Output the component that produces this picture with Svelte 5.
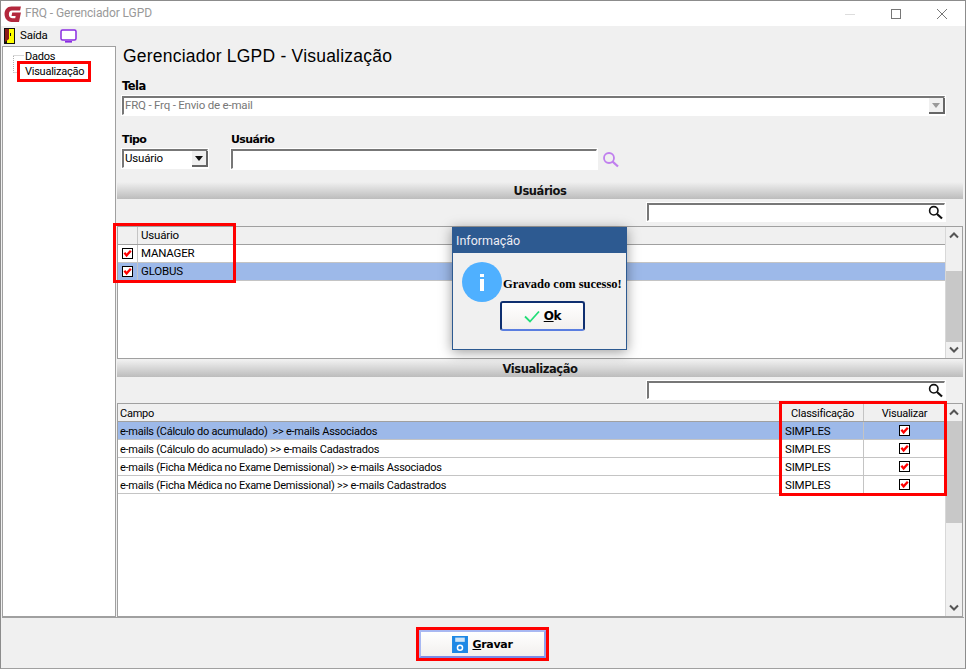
<script>
  const users = [{ name: 'MANAGER', sel: false }, { name: 'GLOBUS', sel: true }];
  const campos = [
    { t: 'e-mails (Cálculo do acumulado)  >> e-mails Associados', sel: true },
    { t: 'e-mails (Cálculo do acumulado) >> e-mails Cadastrados', sel: false },
    { t: 'e-mails (Ficha Médica no Exame Demissional) >> e-mails Associados', sel: false },
    { t: 'e-mails (Ficha Médica no Exame Demissional) >> e-mails Cadastrados', sel: false }
  ];
</script>

{#snippet check()}
  <svg class="check" width="11" height="11" viewBox="0 0 11 11"><rect x="0.5" y="0.5" width="10" height="10" fill="#fff" stroke="#000"/><path d="M2.4 4.8 L4.6 7.4 L8.8 2.8" fill="none" stroke="#f00" stroke-width="2.3"/></svg>
{/snippet}

{#snippet lens()}
  <svg class="lens" width="15" height="15" viewBox="0 0 15 15"><circle cx="5.8" cy="5.8" r="4.2" fill="none" stroke="#111" stroke-width="1.6"/><path d="M9 9 L14 13.5" stroke="#111" stroke-width="2.2"/></svg>
{/snippet}

{#snippet scrollbar(top, height)}
  <div class="scroll">
    <svg class="arrow" width="16" height="17" viewBox="0 0 16 17"><path d="M4 10.5 L8 6.5 L12 10.5" fill="none" stroke="#555" stroke-width="2"/></svg>
    <div class="track"><div class="thumb" style="margin-top:{top}px;height:{height}px"></div></div>
    <svg class="arrow" width="16" height="17" viewBox="0 0 16 17"><path d="M4 6.5 L8 10.5 L12 6.5" fill="none" stroke="#555" stroke-width="2"/></svg>
  </div>
{/snippet}

<div class="window">
  <header class="titlebar">
    <svg class="logo" width="18" height="18" viewBox="0 0 17 17"><path d="M16 1.5 H7 C3 1.5 .5 4.6 .5 8.6 C.5 12.8 3.2 16 7.2 16 H14.2 L16 7.2 H7.8 L7.1 10.4 H11 L10.6 12.4 H7.6 C5.6 12.4 4.6 10.8 4.6 8.8 C4.6 6.6 5.8 5.2 7.6 5.2 H15.2 Z" fill="#b3273c"/></svg>
    <span class="apptitle">FRQ - Gerenciador LGPD</span>
    <div class="winbtns">
      <svg width="12" height="12" viewBox="0 0 12 12"><path d="M1 6.5 H11" stroke="#ddd"/></svg>
      <svg width="12" height="12" viewBox="0 0 12 12"><rect x="1.5" y="1.5" width="9" height="9" fill="none" stroke="#777"/></svg>
      <svg width="12" height="12" viewBox="0 0 12 12"><path d="M1 1 L11 11 M11 1 L1 11" stroke="#777"/></svg>
    </div>
  </header>

  <nav class="menu">
    <svg width="11" height="16" viewBox="0 0 11 16"><rect width="11" height="16" fill="#111"/><rect x="3" y="1" width="7" height="14" fill="#ff0"/><path d="M1 1 H5 V11 L1 14 Z" fill="#8b1a1a"/><rect x="6" y="5" width="1" height="3" fill="#111"/></svg>
    <span class="exit">Saída</span>
    <svg class="monitor" width="17" height="14" viewBox="0 0 17 14"><rect x="1" y="1" width="15" height="10" rx="1.5" fill="#fff" stroke="#8a2be2" stroke-width="1.5"/><rect x="5" y="12" width="7" height="1.6" fill="#8a2be2"/></svg>
  </nav>

  <div class="content">
    <aside class="tree">
      <svg class="links" width="24" height="30" viewBox="0 0 24 30"><path d="M10.5 9 V25.5 M10.5 8.5 H21 M10.5 25.5 H15" fill="none" stroke="#b0b0b0" stroke-dasharray="1 1"/></svg>
      <div class="node first">Dados</div>
      <div class="node"><span class="mark">Visualização</span></div>
    </aside>

    <main class="main">
      <h1>Gerenciador LGPD - Visualização</h1>
      <div class="lbl tela">Tela</div>
      <div class="field combo disabled">
        <span>FRQ - Frq - Envio de e-mail</span>
        <span class="dd dim"><i></i></span>
      </div>

      <div class="filters">
        <div>
          <div class="lbl">Tipo</div>
          <div class="field combo tipo"><span>Usuário</span><span class="dd"><i></i></span></div>
        </div>
        <div>
          <div class="lbl">Usuário</div>
          <div class="userrow">
            <div class="field user"></div>
            <svg width="17" height="17" viewBox="0 0 17 17"><circle cx="7" cy="7" r="5" fill="none" stroke="#c07fee" stroke-width="1.8"/><path d="M10.6 10.6 L16 15.5" stroke="#c07fee" stroke-width="2.2"/></svg>
          </div>
        </div>
      </div>

      <div class="bar b1">Usuários</div>
      <div class="searchrow"><div class="field search">{@render lens()}</div></div>
      <section class="grid g1">
        <div class="gridbody">
          <div class="row head"><div class="c cb"></div><div class="c grow">Usuário</div></div>
          {#each users as u}
            <div class="row" class:sel={u.sel}><div class="c cb plain">{@render check()}</div><div class="c grow">{u.name}</div></div>
          {/each}
          <div class="boxu"></div>
        </div>
        {@render scrollbar(27, 71)}
      </section>

      <div class="bar b2">Visualização</div>
      <div class="searchrow s2"><div class="field search">{@render lens()}</div></div>
      <section class="grid g2">
        <div class="gridbody">
          <div class="row head"><div class="c grow">Campo</div><div class="c cl center">Classificação</div><div class="c vi center">Visualizar</div></div>
          {#each campos as r}
            <div class="row" class:sel={r.sel}><div class="c grow pre">{r.t}</div><div class="c cl">SIMPLES</div><div class="c vi center">{@render check()}</div></div>
          {/each}
          <div class="boxv"></div>
        </div>
        {@render scrollbar(0, 102)}
      </section>
    </main>
  </div>

  <footer class="footer">
    <div class="redbtn">
      <button class="btn gravar">
        <svg width="16" height="17" viewBox="0 0 15 16"><rect width="15" height="16" fill="#1e88e5"/><rect x="3" y="1.5" width="9" height="4" fill="#cfe4f7"/><circle cx="7.5" cy="11" r="2.4" fill="none" stroke="#fff" stroke-width="1.4"/></svg>
        <span><u>G</u>ravar</span>
      </button>
    </div>
  </footer>

  <div class="dialog" role="dialog">
    <div class="dlghead">Informação</div>
    <div class="dlgbody">
      <div class="msg">
        <div class="info"><b></b><i></i></div>
        <span class="msgtext">Gravado com sucesso!</span>
      </div>
      <button class="btn ok">
        <svg width="16" height="13" viewBox="0 0 16 13"><path d="M1 6.5 L6 11.5 L15 1.5" fill="none" stroke="#22dd77" stroke-width="1.8"/></svg>
        <span><u>O</u>k</span>
      </button>
    </div>
  </div>
</div>

<style>
  :global(body) { margin: 0; background: #f0f0f0; }
  .window {
    position: relative; width: 966px; height: 669px; box-sizing: border-box;
    border: 1px solid #8c8c8c; border-bottom-color: #a0a0a0; background: #f0f0f0;
    display: flex; flex-direction: column; overflow: hidden;
    font: 11.5px/1 Roboto, "Liberation Sans", Arial, sans-serif; letter-spacing: -0.2px; color: #000;
  }
  .titlebar { height: 25px; flex: none; background: #fff; display: flex; align-items: center; padding-left: 3px; box-sizing: border-box; }
  .apptitle { margin: 0 0 1px 3px; font: 12px Roboto, sans-serif; letter-spacing: -0.1px; color: #999; }
  .winbtns { margin-left: auto; display: flex; gap: 34px; padding-right: 17px; }
  .menu { height: 20px; flex: none; display: flex; align-items: center; padding-left: 3px; box-sizing: border-box; }
  .exit { margin-left: 5px; font-size: 11.5px; width: 29px; }
  .monitor { margin-left: 11px; }
  .content { flex: none; height: 571px; display: flex; }
  .tree { width: 114px; margin-left: 1px; flex: none; background: #fff; border: 1px solid #a0a0a0; box-sizing: border-box; position: relative; }
  .links { position: absolute; left: 0; top: 0; }
  .node { height: 16px; padding-left: 17px; display: flex; align-items: center; font-size: 11px; letter-spacing: -0.25px; position: relative; }
  .first { margin-top: 1px; padding-left: 22px; }
  .mark { outline: 3px solid #f00; padding: 1px 4px 0 5px; line-height: 14px; margin-bottom: 1px; background: #fff; }
  .main { flex: none; width: 846px; margin-left: 1px; display: flex; flex-direction: column; box-sizing: border-box; }
  h1 { margin: 0 0 0 6px; font: 400 17.5px/20px "Liberation Sans", sans-serif; letter-spacing: 0.22px; height: 20px; flex: none; }
  .lbl { font: 700 11.5px/14px "DejaVu Sans", sans-serif; letter-spacing: -0.55px; display: block; height: 14px; }
  .tela { margin: 13px 0 3px 5px; }
  .field { box-sizing: border-box; background: #fff; border: 1px solid #fff; border-top: 2px solid #777; border-left: 2px solid #777; display: flex; align-items: center; outline: 1px solid #fff; }
  .combo { height: 19px; padding-left: 1px; justify-content: space-between; flex: none; }
  .disabled { width: 823px; margin-left: 5px; color: #777; }
  .dd { width: 16px; height: 16px; background: #f0f0f0; border-right: 2px solid #666; border-bottom: 2px solid #666; box-sizing: border-box; display: flex; align-items: center; justify-content: center; margin-right: -1px; }
  .dd i { border: 4px solid transparent; border-top: 5px solid #111; border-bottom: 0; }
  .dim i { border-top-color: #999; }
  .filters { display: flex; margin: 18px 0 0 5px; gap: 23px; }
  .filters .lbl { margin-bottom: 2px; font-size: 11px; letter-spacing: -0.6px; }
  .tipo { width: 86px; }
  .userrow { display: flex; align-items: center; gap: 5px; }
  .user { width: 366px; height: 20px; }
  .bar { height: 17px; flex: none; background: linear-gradient(#f0f0f0, #bcbcbc); font: 700 11.5px/18px "DejaVu Sans", sans-serif; letter-spacing: -0.45px; text-align: center; color: #111; overflow: hidden; }
  .b1 { margin-top: 13px; }
  .b2 { margin-top: 1px; }
  .searchrow { display: flex; justify-content: flex-end; padding: 4px 18px 0 0; height: 22px; box-sizing: border-box; flex: none; }
  .search { width: 298px; height: 18px; justify-content: flex-end; }
  .lens { margin-right: 1px; }
  .grid { border: 1px solid #a0a0a0; display: flex; box-sizing: border-box; background: #fff; flex: none; }
  .g1 { height: 133px; margin-top: 5px; }
  .g2 { height: 214px; margin-top: 4px; }
  .gridbody { flex: 1; position: relative; }
  .row { display: flex; height: 18px; border-bottom: 1px solid #c4c4c4; box-sizing: border-box; }
  .head { background: #f0f0f0; border-bottom: 1px solid #a0a0a0; }
  .sel { background: #9db9e9; }
  .c { display: flex; align-items: center; padding: 1px 0 0 2px; box-sizing: border-box; border-right: 1px solid #c4c4c4; }
  .grow { flex: 1; min-width: 0; }
  .g2 .grow, .g2 .center { font-size: 11px; letter-spacing: -0.25px; }
  .pre { white-space: pre; }
  .g1 .grow { padding-left: 3px; border-right: 0; }
  .cb { width: 20px; background: #f0f0f0; justify-content: center; padding: 0; }
  .cb.plain { background: transparent; }
  .cl { width: 82px; flex: none; padding: 2px 0 0 3px; }
  .vi { width: 81px; flex: none; border-right: 0; }
  .center { justify-content: center; padding: 1px 0 0; }
  .check { display: block; margin-top: -1px; }
  .scroll { width: 16px; flex: none; border-left: 1px solid #d8d8d8; background: #f0f0f0; display: flex; flex-direction: column; }
  .track { flex: 1; min-height: 0; }
  .thumb { background: #c8c8c8; }
  .arrow { flex: none; display: block; }
  .boxu { position: absolute; left: -5px; top: -4px; width: 123px; height: 60px; border: 3px solid #f00; box-sizing: border-box; pointer-events: none; }
  .boxv { position: absolute; left: 661px; top: -3px; width: 168px; height: 95px; border: 3px solid #f00; box-sizing: border-box; pointer-events: none; }
  .footer { flex: 1; display: flex; justify-content: center; align-items: flex-start; padding-top: 9px; box-sizing: border-box; border-top: 1px solid #a0a0a0; margin: 0 1px; }
  .redbtn { border: 3px solid #f00; margin-left: -1px; }
  .btn { box-sizing: border-box; display: flex; align-items: center; justify-content: center; gap: 4px; background: linear-gradient(#fff, #f2f0ee); font: 700 11px "DejaVu Sans", sans-serif; letter-spacing: -0.3px; color: #000; padding: 0; }
  .gravar { width: 127px; height: 28px; border: 2px solid #a8b8f2; border-bottom-color: #7a8ce8; border-right-color: #8fa0ee; border-radius: 0; }
  .dialog { position: absolute; left: 451px; top: 226px; width: 175px; height: 123px; box-sizing: border-box; border: 1px solid #2d5a91; background: #f0f0f0; box-shadow: 0 2px 12px rgba(0,0,0,.4); }
  .dlghead { height: 25px; background: #2d5a91; color: #ececf4; font: 12.5px/26px Roboto, sans-serif; letter-spacing: 0; padding-left: 3px; }
  .dlgbody { display: flex; flex-direction: column; }
  .msg { display: flex; align-items: center; padding: 9px 0 0 9px; }
  .info { width: 40px; height: 40px; border-radius: 50%; background: #4fb0ff; flex: none; display: flex; flex-direction: column; align-items: center; justify-content: center; gap: 2px; }
  .info b { width: 4px; height: 3px; background: #fff; }
  .info i { width: 4px; height: 12px; background: #fff; }
  .msgtext { font: 700 12.5px "Liberation Serif", serif; letter-spacing: 0; margin: 5px 0 0 1px; white-space: nowrap; }
  .ok { width: 85px; height: 30px; margin: -1px 0 0 47px; border: 2px solid #0f2f70; border-bottom-color: #5a7ee0; border-radius: 3px; gap: 4px; font-size: 12px; }
</style>
